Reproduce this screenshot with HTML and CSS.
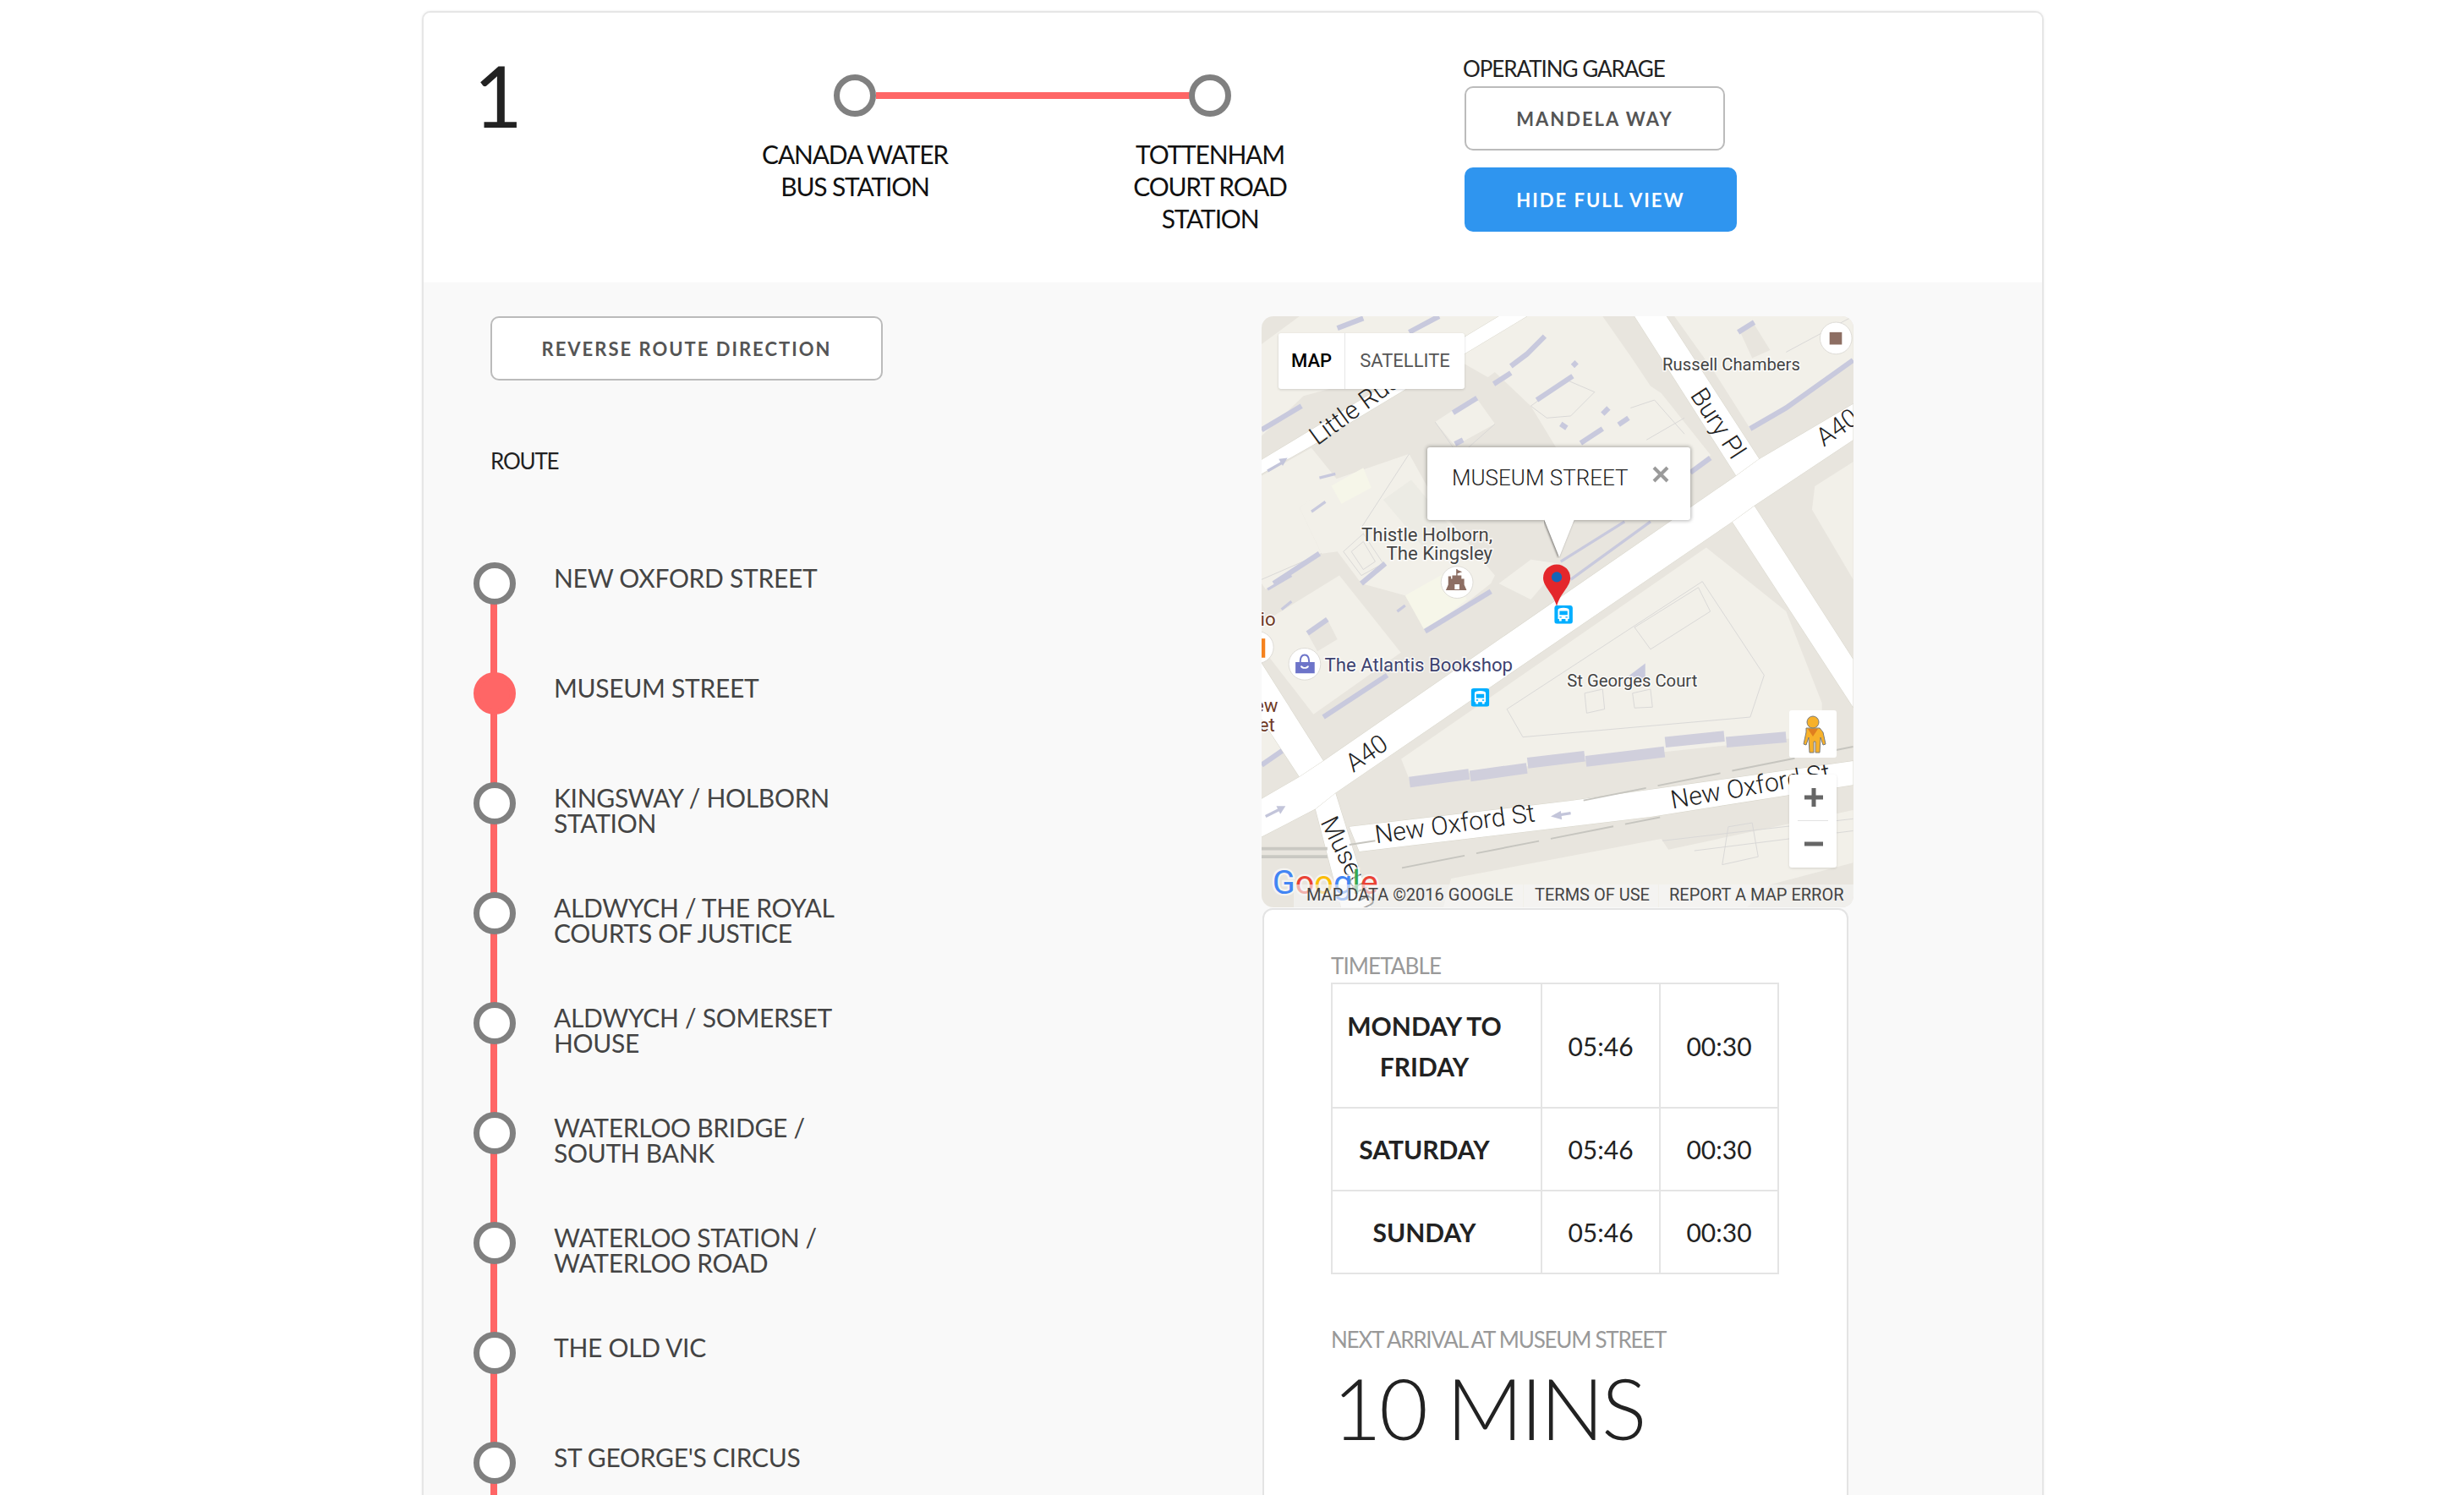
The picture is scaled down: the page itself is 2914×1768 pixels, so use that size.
FILE: index.html
```html
<!DOCTYPE html>
<html lang="en">
<head>
<meta charset="utf-8">
<title>Route 1</title>
<link rel="stylesheet" href="styles.css">
</head>
<body>
<main class="card">
  <header class="head">
    <div class="route-no">1</div>
    <div class="ends">
      <div class="end">
        <span class="dot"></span>
        <p>CANADA WATER<br>BUS STATION</p>
      </div>
      <div class="end end-last">
        <span class="dot"></span>
        <p>TOTTENHAM<br>COURT ROAD<br>STATION</p>
      </div>
    </div>
    <div class="garage">
      <div class="garage-label">OPERATING GARAGE</div>
      <button class="btn btn-garage">MANDELA WAY</button>
      <button class="btn btn-blue">HIDE FULL VIEW</button>
    </div>
  </header>
  <section class="body">
    <div class="left">
      <button class="btn btn-reverse">REVERSE ROUTE DIRECTION</button>
      <div class="route-label">ROUTE</div>
      <ol class="stops">
        <li class="stop"><span class="dot"></span><span class="stop-name">NEW OXFORD STREET</span></li>
        <li class="stop current"><span class="dot"></span><span class="stop-name">MUSEUM STREET</span></li>
        <li class="stop"><span class="dot"></span><span class="stop-name">KINGSWAY / HOLBORN<br>STATION</span></li>
        <li class="stop"><span class="dot"></span><span class="stop-name">ALDWYCH / THE ROYAL<br>COURTS OF JUSTICE</span></li>
        <li class="stop"><span class="dot"></span><span class="stop-name">ALDWYCH / SOMERSET<br>HOUSE</span></li>
        <li class="stop"><span class="dot"></span><span class="stop-name">WATERLOO BRIDGE /<br>SOUTH BANK</span></li>
        <li class="stop"><span class="dot"></span><span class="stop-name">WATERLOO STATION /<br>WATERLOO ROAD</span></li>
        <li class="stop"><span class="dot"></span><span class="stop-name">THE OLD VIC</span></li>
        <li class="stop"><span class="dot"></span><span class="stop-name">ST GEORGE'S CIRCUS</span></li>
      </ol>
    </div>
    <div class="right">
      <div class="map">
        <svg class="map-svg" viewBox="25 30 1484 1484" width="700" height="700">
          <defs>
            <symbol id="bus" viewBox="0 0 46 46">
              <rect width="46" height="46" rx="7" class="bus-bg"/>
              <path class="bus-fg" d="M9 12c0-4 5-6 14-6s14 2 14 6v22h-3v5h-6v-5H18v5h-6v-5H9zM13 14v10h20V14zM13 28v3h5v-3zM28 28v3h5v-3z"/>
            </symbol>
          </defs>
          <rect class="ground" x="25" y="30" width="1484" height="1484"/>

          <polygon class="lt" points="25,100 120,30 560,30 880,30 950,130 1000,205 1027,223 1151,378 1100,420 1000,490 880,530 770,370 700,255 610,170 500,250 25,330"/>
          <polygon class="dk" points="130,230 500,130 640,210 480,300 390,390 210,440 150,355 25,425 25,330"/>
          <polygon class="lt" points="460,295 560,230 610,300 510,355"/>
          <polygon class="lt" points="1060,30 1508,30 1508,140 1250,312 1160,170"/>
          <polygon class="dk" points="1225,70 1260,50 1300,115 1255,135"/>
          <polygon class="lt" points="25,430 150,360 215,440 120,510 175,625 35,715 25,700"/>
          <polygon class="lt" points="205,440 395,375 470,510 610,680 600,700 440,825 385,730 275,700 215,620 175,625 120,510"/>
          <polygon class="mid" points="330,490 400,440 500,560 440,620"/>
          <polygon class="lt2" points="200,455 280,410 300,460 225,500"/>
          <polygon class="lt2" points="385,730 500,665 540,740 435,820"/>
          <polygon class="lt" points="25,800 220,680 374,873 155,1028 25,860"/>
          <polygon class="dk" points="140,825 190,790 215,840 165,870"/>
          <polygon class="lt" points="25,1060 90,1100 25,1155"/>
          <polygon class="lt" points="375,1140 1140,610 1340,770 1430,1000 1430,1075 1340,1090 395,1190"/>
          <polygon class="lt" points="1412,456 1508,395 1508,690 1405,515"/>
          <polygon class="lt" points="480,1514 500,1440 1027,1340 1045,1367 1508,1268 1508,1514"/>
          <polygon class="dk" points="1240,1514 1300,1455 1508,1400 1508,1514"/>
          <polygon class="lt" points="620,700 700,640 770,650 730,705 700,740"/>

          <g class="outline">
            <polygon points="640,1015 1130,695 1285,930 1250,1035 680,1085"/>
            <polygon points="960,810 1120,710 1150,770 1000,865"/>
            <polygon points="835,975 880,965 885,1015 840,1025"/>
            <polygon points="955,975 1000,965 1005,1010 960,1012"/>
            <polygon points="1195,1310 1255,1300 1270,1385 1180,1405"/>
            <polyline points="1030,1345 1508,1290"/>
            <polyline points="1110,1370 1508,1320"/>
            <polygon points="230,620 280,575 330,650 275,680"/>
            <polygon points="250,620 280,595 310,645 280,665"/>
            <polyline points="990,340 1085,285"/>
            <polyline points="1340,120 1508,30"/>
            <polyline points="25,690 175,625"/>
            <polyline points="275,560 395,375"/>
            <polyline points="460,295 520,380 610,300"/>
            <polygon points="700,255 790,190 860,220 800,280 740,285"/>
            <polyline points="950,260 1010,240 1085,325"/>
          </g>

          <g class="shadow">
            <polyline points="25,315 125,255"/>
            <polyline points="505,272 565,235"/>
            <polyline points="607,200 650,172"/>
            <polyline points="650,155 690,125 735,80"/>
            <polyline points="715,240 805,180"/>
            <polyline points="825,348 880,312"/>
            <polyline points="920,302 945,285"/>
            <polyline points="1250,312 1340,260 1508,140"/>
            <polyline points="1100,422 1150,385"/>
            <polyline points="1220,70 1260,45"/>
            <polyline points="180,1035 340,930"/>
            <polyline points="140,825 190,790"/>
            <polyline points="25,1155 90,1110"/>
            <polyline points="510,350 530,340"/>
            <polyline points="55,700 170,625"/>
            <polyline points="275,700 335,650"/>
            <polyline points="435,820 600,720"/>
            <polyline points="215,60 280,35"/>
            <polyline points="395,70 470,30"/>
            <polyline points="805,155 815,145"/>
            <polyline points="775,300 790,310"/>
            <polyline points="880,275 895,260"/>
          </g>
          <g class="shadow thin">
            <polyline points="775,645 935,545"/>
            <polyline points="800,690 1000,545"/>
            <polyline points="40,715 100,680"/>
            <polyline points="170,435 210,425"/>
            <polyline points="150,520 185,495"/>
            <polyline points="75,765 100,745"/>
            <polyline points="365,770 385,755"/>
          </g>
          <g class="shadow wide">
            <polyline points="396,1198 545,1178"/>
            <polyline points="548,1183 690,1163"/>
            <polyline points="692,1150 835,1133"/>
            <polyline points="838,1146 1035,1122"/>
            <polyline points="1037,1098 1185,1083"/>
            <polyline points="1190,1098 1340,1085"/>
          </g>
          <polygon class="shadow-fill" points="945,932 987,900 987,940"/>

          <g class="road">
            <polygon points="960,30 1040,30 1300,430 1215,430"/>
            <polygon points="1205,545 1260,505 1508,890 1508,1010"/>
            <polygon points="25,900 180,1145 210,1225 300,1514 225,1514 160,1265 120,1185 25,1040"/>
            <polygon points="25,390 620,30 690,30 150,355 25,425"/>
            <polygon points="25,1240 120,1185 180,1145 1215,430 1270,390 1508,250 1508,340 1260,505 1205,545 210,1225 160,1265 25,1335"/>
            <polygon points="245,1310 800,1245 1508,1145 1508,1205 1000,1285 270,1372"/>
          </g>

          <g class="dash">
            <polyline points="832,1244 1508,1109"/>
            <polyline points="377,1413 1024,1286"/>
            <polyline points="245,1355 310,1345"/>
          </g>
          <polyline class="rail" points="25,1365 190,1365"/>
          <polyline class="rail" points="25,1385 190,1385"/>

          <g class="arrow">
            <polyline points="40,418 80,395"/>
            <polygon points="68,388 90,385 78,405"/>
            <polyline points="35,1284 75,1264"/>
            <polygon points="62,1258 85,1258 72,1278"/>
            <polyline points="800,1276 760,1282"/>
            <polygon points="775,1270 750,1284 778,1292"/>
          </g>

          <text class="rd" transform="translate(165,355) rotate(-36)">Little Rus</text>
          <text class="rd" transform="translate(1098,228) rotate(57)">Bury Pl</text>
          <text class="rd" transform="translate(255,1175) rotate(-35)">A40</text>
          <text class="rd" transform="translate(1435,358) rotate(-35)">A40</text>
          <text class="rd" transform="translate(312,1352) rotate(-8)">New Oxford St</text>
          <text class="rd" transform="translate(1055,1265) rotate(-10)">New Oxford St</text>
          <text class="rd" transform="translate(172,1298) rotate(64)">Museum</text>

          <text class="poi" x="1030" y="165">Russell Chambers</text>
          <text class="poi big end-a" x="604" y="594">Thistle Holborn,</text>
          <text class="poi big end-a" x="604" y="641">The Kingsley</text>
          <text class="poi shop" x="183" y="920">The Atlantis Bookshop</text>
          <text class="poi" x="791" y="958">St Georges Court</text>
          <text class="poi brown" x="22" y="805">io</text>
          <text class="poi brown" x="6" y="1023">ew</text>
          <text class="poi brown" x="18" y="1071">et</text>

          <circle class="badge" cx="1465" cy="85" r="40"/>
          <rect class="brown-fill" x="1449" y="70" width="31" height="31"/>

          <circle class="badge" cx="515" cy="697" r="40"/>
          <path class="brown-fill" d="M513 664h3v2l12 5-12 4v5h10v8h7v-6h0v21l6 14h-52l6-14v-21h7v6h3v-8h10zM509 702v13h12v-13z"/>

          <circle class="badge" cx="133" cy="902" r="40"/>
          <path class="bag" d="M110 897h10c0-14 5-20 13-20s13 6 13 20h12v28h-48zM124 897h18c0-10-3-16-9-16s-9 6-9 16z"/>
          <path class="bag-smile" d="M122 907c3 9 19 9 22 0l-4-1c-3 5-11 5-14 0z"/>

          <circle class="badge" cx="15" cy="860" r="40"/>
          <rect class="orange" x="25" y="838" width="9" height="48"/>

          <use href="#bus" x="759" y="755" width="46" height="46"/>
          <use href="#bus" x="550" y="963" width="46" height="46"/>

          <path class="pin" d="M765 757C757 725 731 708 731 686a34 34 0 0 1 68 0C799 708 773 725 765 757z"/>
          <circle class="pin-dot" cx="765" cy="684" r="13"/>

          <text class="glogo" x="52" y="1477"><tspan class="g-b">G</tspan><tspan class="g-r">o</tspan><tspan class="g-y">o</tspan><tspan class="g-b">g</tspan><tspan class="g-g">l</tspan><tspan class="g-r">e</tspan></text>
        </svg>

        <div class="map-type">
          <span class="mt-map">MAP</span>
          <span class="mt-sat">SATELLITE</span>
        </div>

        <div class="info">
          <span class="info-title">MUSEUM STREET</span>
          <span class="info-close">
            <svg viewBox="0 0 20 20" width="20" height="20"><path d="M2 2l16 16M18 2L2 18"/></svg>
          </span>
          <svg class="info-tail" viewBox="0 0 36 46" width="36" height="46"><path d="M0 0h36L18 45z"/></svg>
        </div>

        <div class="pegman">
          <svg viewBox="0 0 56 56" width="56" height="56">
            <path class="peg" d="M20 21h16l4 5 3 14-3 1-3-9-1 18h-5V37h-2v13h-5l-1-18-3 9-3-1 3-14z"/>
            <path class="peg-v" d="M22 22h12l-6 9z"/>
            <circle class="peg" cx="28" cy="14" r="7"/>
          </svg>
        </div>

        <div class="zoom-ctl">
          <div class="zoom-btn"><svg viewBox="0 0 22 22" width="22" height="22"><path d="M8.500 0h5v8.500H22v5h-8.500V22h-5v-8.500H0v-5h8.500z"/></svg></div>
          <div class="zoom-sep"></div>
          <div class="zoom-btn"><svg viewBox="0 0 22 22" width="22" height="22"><path d="M0 8.500h22v5H0z"/></svg></div>
        </div>

        <div class="attrib">
          <span class="at at-data">MAP DATA ©2016 GOOGLE</span>
          <span class="at at-terms">TERMS OF USE</span>
          <span class="at at-report">REPORT A MAP ERROR</span>
        </div>
      </div>

      <div class="panel">
        <div class="panel-label">TIMETABLE</div>
        <table class="tt">
          <tr class="r1"><th>MONDAY TO FRIDAY</th><td>05:46</td><td>00:30</td></tr>
          <tr class="r2"><th>SATURDAY</th><td>05:46</td><td>00:30</td></tr>
          <tr class="r3"><th>SUNDAY</th><td>05:46</td><td>00:30</td></tr>
        </table>
        <div class="panel-label next">NEXT ARRIVAL AT MUSEUM STREET</div>
        <div class="mins">10 MINS</div>
      </div>
    </div>
  </section>
</main>
</body>
</html>
```

FILE: styles.css
```css
* { box-sizing: border-box; }
html, body { margin: 0; padding: 0; height: 1768px; overflow: hidden; background: #fff; }
body { font-family: Lato, "Open Sans", sans-serif; color: #222; }
p, ol { margin: 0; padding: 0; }

.card {
  width: 1918px;
  height: 1900px;
  margin: 13px auto 0 499px;
  border: 2px solid #e6e6e6;
  border-radius: 10px;
  overflow: hidden;
  background: #f9f9f9;
  box-shadow: 0 0 3px rgba(0,0,0,.08);
}

.dot {
  display: block;
  width: 50px;
  height: 50px;
  border: 7px solid #808080;
  border-radius: 50%;
  background: #fff;
}

.head {
  display: flex;
  height: 319px;
  background: #fff;
}
.route-no {
  width: 300px;
  padding: 37px 0 0 59px;
  font-size: 100px;
  line-height: 120px;
  color: #222;
}
.ends {
  display: flex;
  width: 931px;
  padding-top: 73px;
}
.end {
  position: relative;
  display: flex;
  flex-direction: column;
  align-items: center;
  width: 420px;
}
.end p {
  margin-top: 25px;
  font-size: 30px;
  line-height: 38px;
  letter-spacing: -1.2px;
  color: #111;
  text-align: center;
}
.end:first-child::after {
  content: "";
  position: absolute;
  left: 235px;
  top: 21px;
  width: 375px;
  height: 8px;
  background: #ff6666;
}
.garage { padding-top: 50px; }
.garage-label {
  height: 37px;
  margin-left: -2px;
  font-size: 26px;
  line-height: 32px;
  letter-spacing: -1.05px;
  color: #222;
}
.btn {
  display: block;
  font-family: Lato, sans-serif;
  font-weight: 700;
  border-radius: 10px;
  background: #fff;
  border: 2px solid #bbb;
  color: #555;
  font-size: 22px;
  letter-spacing: 2px;
  padding: 0;
}
.btn-garage { width: 308px; height: 76px; }
.btn-blue {
  width: 322px;
  height: 76px;
  margin-top: 20px;
  background: #2f95ef;
  border: 0;
  color: #fff;
}

.body { display: flex; }
.left { width: 991px; padding: 40px 0 0 79px; flex: none; }
.btn-reverse { width: 464px; height: 76px; }
.route-label {
  margin-top: 79px;
  height: 32px;
  font-size: 26px;
  line-height: 32px;
  letter-spacing: -1.2px;
  color: #222;
}
.stops { list-style: none; margin: 105px 0 0 -20px; }
.stop {
  position: relative;
  display: flex;
  height: 130px;
}
.stop::before {
  content: "";
  position: absolute;
  left: 20px;
  top: 40px;
  width: 8px;
  height: 130px;
  background: #ff6666;
}
.stop .dot { position: relative; flex: none; top: -1px; }
.stop.current .dot { background: #ff6666; border-color: #ff6666; }
.stop-name {
  margin: 2px 0 0 45px;
  font-size: 30px;
  line-height: 30px;
  letter-spacing: -.3px;
  color: #444;
}

.right { width: 700px; padding-top: 40px; flex: none; }
.map {
  position: relative;
  width: 700px;
  height: 699px;
  border-radius: 14px;
  overflow: hidden;
}
.map-svg { display: block; }

.ground { fill: #e8e5de; }
.lt { fill: #f2f0e9; }
.lt2 { fill: #f6f6e9; }
.mid { fill: #ecebe4; }
.dk { fill: #e8e5de; }
.outline polygon, .outline polyline { fill: none; stroke: #d8d7d6; stroke-width: 2; }
.shadow polyline { fill: none; stroke: #c8c9dd; stroke-width: 13; }
.shadow.thin polyline { stroke-width: 7; }
.shadow.wide polyline { stroke: #d0cfdc; stroke-width: 27; }
.shadow-fill { fill: #c8c9dd; }
.road polygon { fill: #fff; stroke: #d6d3c8; stroke-width: 2; paint-order: stroke; }
.dash polyline { fill: none; stroke: #c6c5bf; stroke-width: 4; stroke-dasharray: 160 30; }
.rail { fill: none; stroke: #c9c8c2; stroke-width: 8; }
.arrow polyline { fill: none; stroke: #c3c5da; stroke-width: 7; }
.arrow polygon { fill: #c3c5da; }

.rd { font-family: Roboto, sans-serif; font-weight: 300; font-size: 64px; fill: #222; }
.poi {
  font-family: Roboto, sans-serif;
  font-size: 43px;
  fill: #444;
  stroke: #fff;
  stroke-width: 6px;
  stroke-opacity: .75;
  paint-order: stroke;
}
.big { font-size: 47px; }
.end-a { text-anchor: end; }
.shop { fill: #3d4270; font-size: 47px; }
.brown { fill: #6f3a26; font-size: 47px; }

.badge { fill: #fff; stroke: #dcdad4; stroke-width: 2; }
.brown-fill { fill: #8d6e63; }
.bag { fill: #6d74c9; }
.bag-smile { fill: #fff; }
.orange { fill: #f5821f; }
.bus-bg { fill: #00aeff; }
.bus-fg { fill: #fff; fill-rule: evenodd; }
.pin { fill: #e4272b; }
.pin-dot { fill: #1565b8; }

.glogo {
  font-family: Roboto, sans-serif;
  font-weight: 400;
  font-size: 84px;
  stroke: #fff;
  stroke-width: 10px;
  stroke-opacity: .6;
  paint-order: stroke;
}
.g-b { fill: #4285f4; }
.g-r { fill: #ea4335; }
.g-y { fill: #fbbc05; }
.g-g { fill: #34a853; }

.map-type {
  position: absolute;
  left: 20px;
  top: 20px;
  display: flex;
  height: 66px;
  background: #fff;
  border-radius: 3px;
  font-family: Roboto, sans-serif;
  font-size: 22px;
  line-height: 66px;
  box-shadow: 0 1px 3px rgba(0,0,0,.15);
}
.mt-map {
  width: 79px;
  text-align: center;
  font-weight: 500;
  color: #000;
  border-right: 1px solid #e6e6e6;
}
.mt-sat { width: 141px; text-align: center; color: #565656; }

.info {
  position: absolute;
  left: 196px;
  top: 155px;
  width: 311px;
  height: 86px;
  background: #fff;
  border-radius: 3px;
  box-shadow: 0 0 4px 1px rgba(0,0,0,.3);
}
.info-title {
  position: absolute;
  left: 29px;
  top: 19px;
  font-family: Roboto, sans-serif;
  font-weight: 300;
  font-size: 26px;
  line-height: 34px;
  color: #222;
}
.info-close { position: absolute; left: 266px; top: 22px; width: 20px; height: 20px; }
.info-close svg { display: block; }
.info-close path { stroke: #9a9a9a; stroke-width: 4; fill: none; }
.info-tail { position: absolute; left: 138px; top: 85px; }
.info-tail path { fill: #fff; filter: drop-shadow(-1px 1px 1px rgba(0,0,0,.45)); }

.pegman {
  position: absolute;
  left: 624px;
  top: 466px;
  width: 56px;
  height: 56px;
  background: #fff;
  border-radius: 3px;
}
.pegman svg { display: block; }
.peg { fill: #f7b12a; stroke: #7a7a7a; stroke-width: 1; }
.peg-v { fill: #e07f1f; }

.zoom-ctl {
  position: absolute;
  left: 624px;
  top: 542px;
  width: 56px;
  height: 110px;
  background: #fff;
  border-radius: 3px;
  box-shadow: 0 1px 3px rgba(0,0,0,.12);
}
.zoom-btn { display: flex; justify-content: center; height: 54px; padding: 16px 0 0 2px; }
.zoom-btn path { fill: #666; }
.zoom-sep { height: 1px; margin: 0 10px; background: #e3e3e3; }

.attrib {
  position: absolute;
  right: 0;
  bottom: 0;
  left: 38px;
  height: 27px;
  display: flex;
  font-family: Roboto, sans-serif;
  font-size: 20px;
  line-height: 25px;
  color: #444;
}
.at { background: rgba(245,245,245,.62); }
.at-data { width: 271px; padding-left: 15px; }
.at-terms { width: 159px; padding-left: 13px; margin-left: 1px; }
.at-report { flex: 1; padding-left: 12px; margin-left: 1px; }

.panel {
  width: 693px;
  height: 900px;
  margin: 1px 0 0 1px;
  padding: 50px 0 0 79px;
  background: #fff;
  border: 2px solid #e4e4e4;
  border-radius: 12px;
}
.panel-label {
  height: 36px;
  font-size: 26px;
  line-height: 32px;
  letter-spacing: -.9px;
  color: #999;
}
.tt {
  width: 530px;
  table-layout: fixed;
  border-collapse: collapse;
  border: 2px solid #e4e4e4;
  font-size: 30px;
  line-height: 48px;
  color: #222;
}
.tt th, .tt td { border: 2px solid #e4e4e4; padding: 0; text-align: center; font-weight: 400; }
.tt th { width: 248px; padding: 0 35px 0 6px; font-weight: 700; letter-spacing: 0; }
.tt .r1 { height: 147px; }
.tt .r2 { height: 98px; }
.tt .r3 { height: 98px; }
.next { margin-top: 61px; letter-spacing: -1.24px; }
.mins {
  margin: 0 0 0 2px;
  font-size: 100px;
  font-weight: 300;
  line-height: 120px;
  color: #222;
  letter-spacing: -2.9px;
}
```
